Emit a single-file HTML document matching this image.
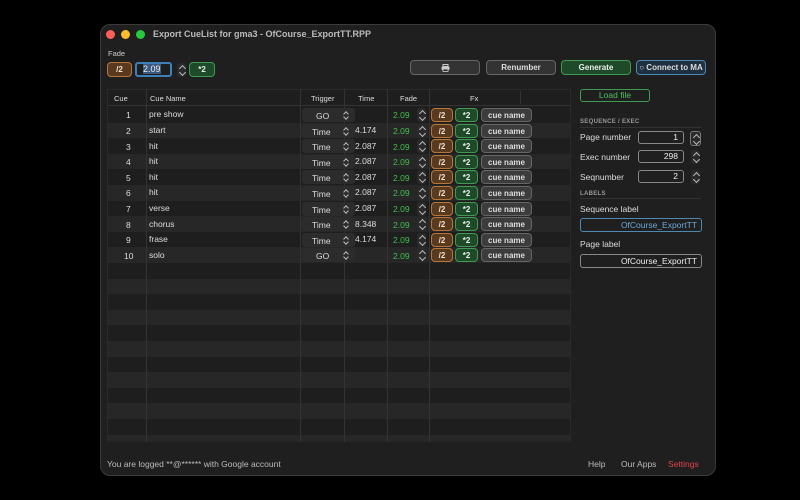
<!DOCTYPE html>
<html><head><meta charset="utf-8"><style>
*{box-sizing:border-box;margin:0;padding:0}
body{width:800px;height:500px;background:#000;font-family:"Liberation Sans",sans-serif;color:#ddd;position:relative;overflow:hidden;font-size:9px}
.a{position:absolute}
.win{left:100px;top:24px;width:616px;height:452px;background:#1f1f1f;border:1px solid #3a3a3a;border-radius:10px}
.dot{width:9px;height:9px;border-radius:50%;top:30px}
.btn{position:absolute;height:15px;border-radius:4px;font-size:8px;font-weight:bold;text-align:center;line-height:13px;color:#ddd}
.gray{background:#333;border:1px solid #666}
.grn{background:#1f4a2a;border:1px solid #3f9a52;color:#e8f0e8}
.brn{background:#5a3a1e;border:1px solid #b8763a;color:#f0e0d0}
.blu{background:#1f3040;border:1px solid #4f88b0}
.row{position:absolute;left:108px;width:462px;height:15.6px}
.vl{position:absolute;top:89px;height:353px;width:1px;background:#333}
.t{position:absolute;font-size:8.5px}
.pick{position:absolute;left:302px;width:53px;height:14px;background:#2c2c2c;border-radius:3px;font-size:8.5px;color:#ddd}
.pick i{position:absolute;left:42px;top:3px;width:4px;height:8px}
.pick i::before,.pick i::after{content:"";position:absolute;left:0;width:3px;height:3px;border-left:1px solid #bbb;border-top:1px solid #bbb}
.pick i::before{top:1px;transform:rotate(45deg)}
.pick i::after{top:4px;transform:rotate(225deg)}
.step{position:absolute;width:9px;height:14px;background:#2a2a2a;border-radius:3px}
.step::before,.step::after{content:"";position:absolute;left:2.5px;width:4px;height:4px;border-left:1px solid #bbb;border-top:1px solid #bbb}
.step::before{top:3px;transform:rotate(45deg)}
.step::after{top:7px;transform:rotate(225deg)}
.inp{position:absolute;height:13px;border:1px solid #888;border-radius:3px;text-align:right;padding-right:5px;font-size:8.5px;line-height:11px;color:#eee}
</style></head><body>
<div class="a win"></div>
<div class="a dot" style="left:106px;background:#fe5f57"></div>
<div class="a dot" style="left:121px;background:#febc2e"></div>
<div class="a dot" style="left:136px;background:#28c840"></div>
<div class="a" style="left:153px;top:29px;font-size:9px;font-weight:bold;color:#bbb">Export CueList for gma3 - OfCourse_ExportTT.RPP</div>
<div class="a" style="left:108px;top:49px;font-size:7.5px;color:#ccc">Fade</div>
<div class="btn brn" style="left:107px;top:62px;width:25px">/2</div>
<div class="a" style="left:135px;top:62px;width:37px;height:15px;border:2px solid #3f7fb8;border-radius:3px;background:#1e1e1e"><span style="background:#3a5a80;color:#eee;font-size:9px;margin-left:6px;line-height:11px">2.09</span></div>
<div class="step" style="left:177px;top:63px"></div>
<div class="btn grn" style="left:189px;top:62px;width:26px">*2</div>
<div class="btn gray" style="left:410px;top:60px;width:70px"><svg width="9" height="8" viewBox="0 0 9 8" style="margin-top:3px"><rect x="2" y="0.5" width="5" height="2" fill="none" stroke="#ccc"/><rect x="0.5" y="2.5" width="8" height="3.5" rx="1" fill="#ccc"/><rect x="2" y="5" width="5" height="2.5" fill="#333" stroke="#ccc" stroke-width=".8"/></svg></div>
<div class="btn gray" style="left:486px;top:60px;width:70px">Renumber</div>
<div class="btn grn" style="left:561px;top:60px;width:70px">Generate</div>
<div class="btn blu" style="left:636px;top:60px;width:70px">○ Connect to MA</div>

<div class="a" style="left:107px;top:89px;width:464px;height:353px;background:#1e1e1e;border:1px solid #2a2a2a"></div>
<div class="a" style="left:108px;top:89px;width:462px;height:17px;border-bottom:1px solid #333"></div>
<div class="t" style="left:114px;top:94px;font-size:7.5px">Cue</div>
<div class="t" style="left:150px;top:94px;font-size:7.5px">Cue Name</div>
<div class="t" style="left:311px;top:94px;font-size:7.5px">Trigger</div>
<div class="t" style="left:358px;top:94px;font-size:7.5px">Time</div>
<div class="t" style="left:400px;top:94px;font-size:7.5px">Fade</div>
<div class="t" style="left:470px;top:94px;font-size:7.5px">Fx</div>
<div class="a" style="left:520px;top:91px;width:1px;height:13px;background:#333"></div>

<div class="row" style="top:122.6px;background:#272727"></div>
<div class="row" style="top:153.8px;background:#272727"></div>
<div class="row" style="top:185px;background:#272727"></div>
<div class="row" style="top:216.2px;background:#272727"></div>
<div class="row" style="top:247.4px;background:#272727"></div>
<div class="row" style="top:278.6px;background:#272727"></div>
<div class="row" style="top:309.8px;background:#272727"></div>
<div class="row" style="top:341px;background:#272727"></div>
<div class="row" style="top:372.2px;background:#272727"></div>
<div class="row" style="top:403.4px;background:#272727"></div>
<div class="row" style="top:434.6px;height:7px;background:#272727"></div>

<div class="vl" style="left:146px"></div>
<div class="vl" style="left:300px"></div>
<div class="vl" style="left:344px"></div>
<div class="vl" style="left:387px"></div>
<div class="vl" style="left:429px"></div>

<div class="t" style="left:126px;top:110px">1</div><div class="t" style="left:149px;top:109px">pre show</div>
<div class="pick" style="top:108px"><span class="a" style="left:14px;top:3px">GO</span><i></i></div>
<div class="t" style="left:393px;top:110px;color:#3fc050">2.09</div><div class="step" style="left:417px;top:108px"></div>
<div class="btn brn" style="left:431px;top:108px;width:22px;height:14px">/2</div><div class="btn grn" style="left:455px;top:108px;width:23px;height:14px">*2</div><div class="btn gray" style="left:481px;top:108px;width:51px;height:14px;background:#3c3c3c">cue name</div>

<div class="t" style="left:126px;top:126px">2</div><div class="t" style="left:149px;top:125px">start</div>
<div class="pick" style="top:123.6px"><span class="a" style="left:10px;top:3px">Time</span><i></i></div><div class="t" style="left:355px;top:125px">4.174</div>
<div class="t" style="left:393px;top:126px;color:#3fc050">2.09</div><div class="step" style="left:417px;top:123.6px"></div>
<div class="btn brn" style="left:431px;top:123.6px;width:22px;height:14px">/2</div><div class="btn grn" style="left:455px;top:123.6px;width:23px;height:14px">*2</div><div class="btn gray" style="left:481px;top:123.6px;width:51px;height:14px;background:#3c3c3c">cue name</div>

<div class="t" style="left:126px;top:142px">3</div><div class="t" style="left:149px;top:141px">hit</div>
<div class="pick" style="top:139.2px"><span class="a" style="left:10px;top:3px">Time</span><i></i></div><div class="t" style="left:355px;top:141px">2.087</div>
<div class="t" style="left:393px;top:142px;color:#3fc050">2.09</div><div class="step" style="left:417px;top:139.2px"></div>
<div class="btn brn" style="left:431px;top:139.2px;width:22px;height:14px">/2</div><div class="btn grn" style="left:455px;top:139.2px;width:23px;height:14px">*2</div><div class="btn gray" style="left:481px;top:139.2px;width:51px;height:14px;background:#3c3c3c">cue name</div>

<div class="t" style="left:126px;top:157px">4</div><div class="t" style="left:149px;top:156px">hit</div>
<div class="pick" style="top:154.8px"><span class="a" style="left:10px;top:3px">Time</span><i></i></div><div class="t" style="left:355px;top:156px">2.087</div>
<div class="t" style="left:393px;top:157px;color:#3fc050">2.09</div><div class="step" style="left:417px;top:154.8px"></div>
<div class="btn brn" style="left:431px;top:154.8px;width:22px;height:14px">/2</div><div class="btn grn" style="left:455px;top:154.8px;width:23px;height:14px">*2</div><div class="btn gray" style="left:481px;top:154.8px;width:51px;height:14px;background:#3c3c3c">cue name</div>

<div class="t" style="left:126px;top:173px">5</div><div class="t" style="left:149px;top:172px">hit</div>
<div class="pick" style="top:170.4px"><span class="a" style="left:10px;top:3px">Time</span><i></i></div><div class="t" style="left:355px;top:172px">2.087</div>
<div class="t" style="left:393px;top:173px;color:#3fc050">2.09</div><div class="step" style="left:417px;top:170.4px"></div>
<div class="btn brn" style="left:431px;top:170.4px;width:22px;height:14px">/2</div><div class="btn grn" style="left:455px;top:170.4px;width:23px;height:14px">*2</div><div class="btn gray" style="left:481px;top:170.4px;width:51px;height:14px;background:#3c3c3c">cue name</div>

<div class="t" style="left:126px;top:188px">6</div><div class="t" style="left:149px;top:187px">hit</div>
<div class="pick" style="top:186px"><span class="a" style="left:10px;top:3px">Time</span><i></i></div><div class="t" style="left:355px;top:187px">2.087</div>
<div class="t" style="left:393px;top:188px;color:#3fc050">2.09</div><div class="step" style="left:417px;top:186px"></div>
<div class="btn brn" style="left:431px;top:186px;width:22px;height:14px">/2</div><div class="btn grn" style="left:455px;top:186px;width:23px;height:14px">*2</div><div class="btn gray" style="left:481px;top:186px;width:51px;height:14px;background:#3c3c3c">cue name</div>

<div class="t" style="left:126px;top:204px">7</div><div class="t" style="left:149px;top:203px">verse</div>
<div class="pick" style="top:201.6px"><span class="a" style="left:10px;top:3px">Time</span><i></i></div><div class="t" style="left:355px;top:203px">2.087</div>
<div class="t" style="left:393px;top:204px;color:#3fc050">2.09</div><div class="step" style="left:417px;top:201.6px"></div>
<div class="btn brn" style="left:431px;top:201.6px;width:22px;height:14px">/2</div><div class="btn grn" style="left:455px;top:201.6px;width:23px;height:14px">*2</div><div class="btn gray" style="left:481px;top:201.6px;width:51px;height:14px;background:#3c3c3c">cue name</div>

<div class="t" style="left:126px;top:220px">8</div><div class="t" style="left:149px;top:219px">chorus</div>
<div class="pick" style="top:217.2px"><span class="a" style="left:10px;top:3px">Time</span><i></i></div><div class="t" style="left:355px;top:219px">8.348</div>
<div class="t" style="left:393px;top:220px;color:#3fc050">2.09</div><div class="step" style="left:417px;top:217.2px"></div>
<div class="btn brn" style="left:431px;top:217.2px;width:22px;height:14px">/2</div><div class="btn grn" style="left:455px;top:217.2px;width:23px;height:14px">*2</div><div class="btn gray" style="left:481px;top:217.2px;width:51px;height:14px;background:#3c3c3c">cue name</div>

<div class="t" style="left:126px;top:235px">9</div><div class="t" style="left:149px;top:234px">frase</div>
<div class="pick" style="top:232.8px"><span class="a" style="left:10px;top:3px">Time</span><i></i></div><div class="t" style="left:355px;top:234px">4.174</div>
<div class="t" style="left:393px;top:235px;color:#3fc050">2.09</div><div class="step" style="left:417px;top:232.8px"></div>
<div class="btn brn" style="left:431px;top:232.8px;width:22px;height:14px">/2</div><div class="btn grn" style="left:455px;top:232.8px;width:23px;height:14px">*2</div><div class="btn gray" style="left:481px;top:232.8px;width:51px;height:14px;background:#3c3c3c">cue name</div>

<div class="t" style="left:124px;top:251px">10</div><div class="t" style="left:149px;top:250px">solo</div>
<div class="pick" style="top:248.4px"><span class="a" style="left:14px;top:3px">GO</span><i></i></div>
<div class="t" style="left:393px;top:251px;color:#3fc050">2.09</div><div class="step" style="left:417px;top:248.4px"></div>
<div class="btn brn" style="left:431px;top:248.4px;width:22px;height:14px">/2</div><div class="btn grn" style="left:455px;top:248.4px;width:23px;height:14px">*2</div><div class="btn gray" style="left:481px;top:248.4px;width:51px;height:14px;background:#3c3c3c">cue name</div>

<div class="a" style="left:580px;top:89px;width:70px;height:13px;border:1px solid #3f9a52;border-radius:3px;text-align:center;color:#4fc060;font-size:8.5px;line-height:11px">Load file</div>
<div class="a" style="left:580px;top:119px;font-size:6px;font-weight:bold;color:#999;letter-spacing:.3px">SEQUENCE / EXEC</div>
<div class="a" style="left:580px;top:127px;width:121px;height:1px;background:#333"></div>
<div class="a" style="left:580px;top:132px;font-size:8.5px">Page number</div>
<div class="inp" style="left:638px;top:131px;width:46px">1</div>
<div class="step" style="left:690px;top:131px;border:1px solid #777;height:15px;width:11px"></div>
<div class="a" style="left:580px;top:152px;font-size:8.5px">Exec number</div>
<div class="inp" style="left:638px;top:150px;width:46px">298</div>
<div class="step" style="left:691px;top:150px"></div>
<div class="a" style="left:580px;top:172px;font-size:8.5px">Seqnumber</div>
<div class="inp" style="left:638px;top:170px;width:46px">2</div>
<div class="step" style="left:691px;top:170px"></div>
<div class="a" style="left:580px;top:191px;font-size:6px;font-weight:bold;color:#999;letter-spacing:.3px">LABELS</div>
<div class="a" style="left:580px;top:198px;width:121px;height:1px;background:#333"></div>
<div class="a" style="left:580px;top:204px;font-size:8.5px">Sequence label</div>
<div class="inp" style="left:580px;top:218px;width:122px;height:14px;border-color:#4f88b0;color:#6fa8d8;line-height:12px;padding-right:4px">OfCourse_ExportTT</div>
<div class="a" style="left:580px;top:239px;font-size:8.5px">Page label</div>
<div class="inp" style="left:580px;top:254px;width:122px;height:14px;line-height:12px;padding-right:4px">OfCourse_ExportTT</div>

<div class="a" style="left:107px;top:459px;font-size:8.5px;color:#bbb">You are logged **@****** with Google account</div>
<div class="a" style="left:588px;top:459px;font-size:8.5px;color:#bbb">Help</div>
<div class="a" style="left:621px;top:459px;font-size:8.5px;color:#bbb">Our Apps</div>
<div class="a" style="left:668px;top:459px;font-size:8.5px;color:#e0434a">Settings</div>
</body></html>
